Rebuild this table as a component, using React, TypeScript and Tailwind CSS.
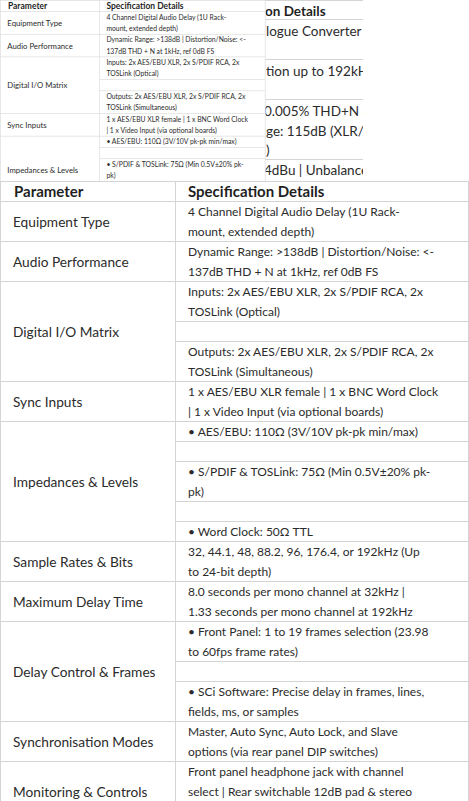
import React from "react";

type Row = { label: string; cells: string[][] };

const rows: Row[] = [
  {
    label: "Equipment Type",
    cells: [["4 Channel Digital Audio Delay (1U Rack-", "mount, extended depth)"]],
  },
  {
    label: "Audio Performance",
    cells: [["Dynamic Range: >138dB | Distortion/Noise: <-", "137dB THD + N at 1kHz, ref 0dB FS"]],
  },
  {
    label: "Digital I/O Matrix",
    cells: [
      ["Inputs: 2x AES/EBU XLR, 2x S/PDIF RCA, 2x", "TOSLink (Optical)"],
      [],
      ["Outputs: 2x AES/EBU XLR, 2x S/PDIF RCA, 2x", "TOSLink (Simultaneous)"],
    ],
  },
  {
    label: "Sync Inputs",
    cells: [["1 x AES/EBU XLR female | 1 x BNC Word Clock", "| 1 x Video Input (via optional boards)"]],
  },
  {
    label: "Impedances & Levels",
    cells: [
      ["• AES/EBU: 110Ω (3V/10V pk-pk min/max)"],
      [],
      ["• S/PDIF & TOSLink: 75Ω (Min 0.5V±20% pk-", "pk)"],
      [],
      ["• Word Clock: 50Ω TTL"],
    ],
  },
  {
    label: "Sample Rates & Bits",
    cells: [["32, 44.1, 48, 88.2, 96, 176.4, or 192kHz (Up", "to 24-bit depth)"]],
  },
  {
    label: "Maximum Delay Time",
    cells: [["8.0 seconds per mono channel at 32kHz |", "1.33 seconds per mono channel at 192kHz"]],
  },
  {
    label: "Delay Control & Frames",
    cells: [
      ["• Front Panel: 1 to 19 frames selection (23.98", "to 60fps frame rates)"],
      [],
      ["• SCi Software: Precise delay in frames, lines,", "fields, ms, or samples"],
    ],
  },
  {
    label: "Synchronisation Modes",
    cells: [["Master, Auto Sync, Auto Lock, and Slave", "options (via rear panel DIP switches)"]],
  },
  {
    label: "Monitoring & Controls",
    cells: [
      [
        "Front panel headphone jack with channel",
        "select | Rear switchable 12dB pad & stereo",
        "/ mono switching",
      ],
    ],
  },
];

const heights: Record<number, string> = {
  1: "h-[20px]",
  2: "h-[40px]",
  3: "h-[60px]",
};

function SpecTable() {
  return (
    <div className="w-[469px] border-l border-t border-r border-[#d4d4d4] bg-white leading-[19.5px] text-[#2b2b2b]">
      {/* Header */}
      <div className="flex h-[20px] text-[15px] font-bold text-[#1f1f1f]">
        <div className="w-[175px] shrink-0 border-b border-r border-[#d4d4d4] pl-[13px]">Parameter</div>
        <div className="flex-1 border-b border-[#d4d4d4] pl-[12px]">Specification Details</div>
      </div>

      {rows.map((row) => (
        <div key={row.label} className="flex">
          <div className="flex w-[175px] shrink-0 items-center border-b border-r border-[#d4d4d4] pl-[12px] text-[13.7px]">
            {row.label}
          </div>
          <div className="flex-1 text-[12px]">
            {row.cells.map((lines, i) => (
              <div
                key={i}
                className={`${heights[Math.max(lines.length, 1)]} overflow-hidden whitespace-nowrap border-b border-[#d4d4d4] pl-[12px]`}
              >
                {lines.map((l) => (
                  <div key={l}>{l}</div>
                ))}
              </div>
            ))}
          </div>
        </div>
      ))}
    </div>
  );
}

function BackLayer() {
  // the wider sheet sitting behind the thumbnail, only its middle strip shows
  return (
    <div className="w-[363px] overflow-hidden whitespace-nowrap text-[13.5px] leading-[19.5px] text-[#2b2b2b]">
      <div className="h-[20px] border-t border-b border-[#d4d4d4] pl-[265px] pt-px font-bold text-[#1f1f1f]">
        on Details
      </div>
      <div className="h-[40px] border-b border-[#d4d4d4] pl-[266px] pt-[2px]">logue Converter</div>
      <div className="h-[40px] border-b border-[#d4d4d4] pl-[266px] pt-[2px]">tion up to 192kHz</div>
      <div className="h-[60px] border-b border-[#d4d4d4] pl-[264px] pt-[2px]">
        <div>0.005% THD+N @</div>
        <div className="pl-[2px]">ge: 115dB (XLR/RCA</div>
        <div className="pl-[2px]">)</div>
      </div>
      <div className="h-[20px] pl-[264px] pt-px">4dBu | Unbalanced</div>
    </div>
  );
}

export default function App() {
  return (
    <div className="h-[801px] w-[469px] overflow-hidden bg-white font-['Lato',sans-serif]">
      {/* Top strip: back sheet + scaled thumbnail on top */}
      <div className="relative h-[181px] overflow-hidden">
        <BackLayer />
        <div className="absolute left-0 top-0 origin-top-left scale-[0.566]">
          <SpecTable />
        </div>
      </div>

      <SpecTable />
    </div>
  );
}
